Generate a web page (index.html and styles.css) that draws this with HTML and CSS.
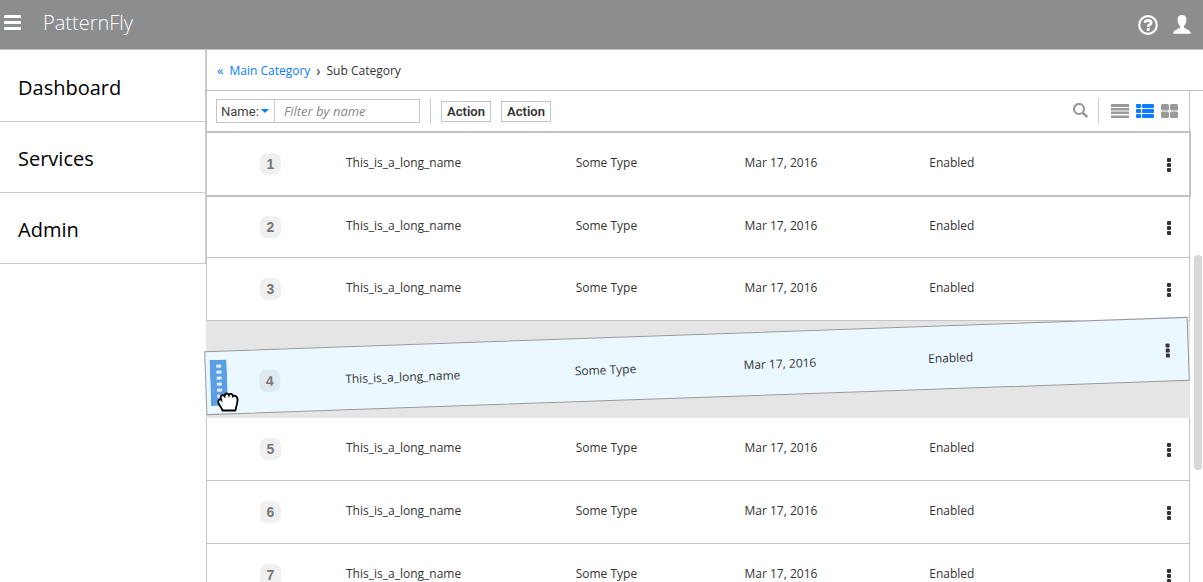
FILE: index.html
```
<!DOCTYPE html>
<html lang="en">
<head>
  <meta charset="UTF-8">
  <meta name="viewport" content="width=device-width, initial-scale=1.0">
  <title>PatternFly</title>
  <link rel="stylesheet" href="styles.css">
</head>
<body>
  <!-- Shared icons -->
  <svg class="sprite" aria-hidden="true">
    <symbol id="kebab" viewBox="0 0 6 16">
      <rect x="1" y="1" width="4" height="4" rx="1"/>
      <rect x="1" y="6" width="4" height="4" rx="1"/>
      <rect x="1" y="11" width="4" height="4" rx="1"/>
    </symbol>
  </svg>

  <header class="masthead">
    <button class="icon-btn menu-btn" aria-label="Toggle navigation">
      <svg width="17" height="15" viewBox="0 0 17 15" fill="#fff">
        <rect width="17" height="3" rx="1"/>
        <rect y="6" width="17" height="3" rx="1"/>
        <rect y="12" width="17" height="3" rx="1"/>
      </svg>
    </button>
    <span class="brand">PatternFly</span>
    <div class="masthead-tools">
      <button class="icon-btn" aria-label="Help">
        <svg width="20" height="20" viewBox="0 0 20 20" fill="none" stroke="#fff">
          <circle cx="10" cy="10" r="8.8" stroke-width="2.2"/>
          <path d="M6.8 7.8C7.2 5.9 8.4 5.3 10 5.3C11.9 5.3 13.1 6.3 13.1 7.7C13.1 9.8 10.2 9.7 10.2 12" stroke-width="2.8"/>
          <rect x="8.8" y="13" width="2.8" height="2.8" fill="#fff" stroke="none"/>
        </svg>
      </button>
      <button class="icon-btn" aria-label="User">
        <svg width="18" height="19" viewBox="0 0 18 19" fill="#fff">
          <path d="M9 0C6.2 0 4.5 1.8 4.5 4.5C4.5 7.5 5.5 9.5 7 10.7V12.5C6.5 13.7 1 14.3 0 18.7H18C17 14.3 11.5 13.7 11 12.5V10.7C12.5 9.5 13.5 7.5 13.5 4.5C13.5 1.8 11.8 0 9 0Z"/>
        </svg>
      </button>
    </div>
  </header>

  <div class="page">
    <nav class="sidebar">
      <a href="#">Dashboard</a>
      <a href="#">Services</a>
      <a href="#">Admin</a>
    </nav>

    <main class="main">
      <nav class="breadcrumb" aria-label="Breadcrumb">
        <a href="#"><span class="back">«</span>Main Category</a>
        <span class="sep">›</span>
        <span>Sub Category</span>
      </nav>

      <div class="content">
        <div class="list-view">
          <div class="toolbar">
            <div class="filter">
              <div class="filter-field">
                <select aria-label="Filter field">
                  <option>Name:</option>
                </select>
                <svg class="caret" width="8" height="4" viewBox="0 0 8 4"><path d="M0 0H8L4 4Z" fill="#0a7cff"/></svg>
              </div>
              <input type="text" placeholder="Filter by name" aria-label="Filter by name">
            </div>
            <span class="divider"></span>
            <button class="action">Action</button>
            <button class="action">Action</button>
            <div class="view-tools">
              <button class="icon-btn" aria-label="Search">
                <svg width="16" height="16" viewBox="0 0 16 16" fill="none" stroke="#999">
                  <circle cx="7" cy="6" r="5" stroke-width="2.2"/>
                  <path d="M11 10L14.5 13.3" stroke-width="2.6" stroke-linecap="round"/>
                </svg>
              </button>
              <span class="divider"></span>
              <button class="icon-btn" aria-label="Table view">
                <svg width="18" height="14" viewBox="0 0 18 14" fill="#999">
                  <rect width="18" height="3"/>
                  <rect y="4" width="18" height="2.5"/>
                  <rect y="7.5" width="18" height="2.5"/>
                  <rect y="11.5" width="18" height="2.5"/>
                </svg>
              </button>
              <button class="icon-btn" aria-label="List view" aria-pressed="true">
                <svg width="18" height="14" viewBox="0 0 18 14" fill="#0a7cff">
                  <rect width="5" height="4" rx="1"/><rect x="6" width="12" height="4" rx="1"/>
                  <rect y="5" width="5" height="4" rx="1"/><rect x="6" y="5" width="12" height="4" rx="1"/>
                  <rect y="10" width="5" height="4" rx="1"/><rect x="6" y="10" width="12" height="4" rx="1"/>
                </svg>
              </button>
              <button class="icon-btn" aria-label="Card view">
                <svg width="18" height="14" viewBox="0 0 18 14" fill="#999">
                  <rect width="8" height="6.5" rx="1.5"/><rect x="9" width="8" height="6.5" rx="1.5"/>
                  <rect y="7.5" width="8" height="6.5" rx="1.5"/><rect x="9" y="7.5" width="8" height="6.5" rx="1.5"/>
                </svg>
              </button>
            </div>
          </div>

          <table class="list" aria-label="Items">
            <tbody>
              <tr class="selected">
                <td class="order"><span class="badge">1</span></td>
                <td>This_is_a_long_name</td>
                <td>Some Type</td>
                <td>Mar 17, 2016</td>
                <td>Enabled</td>
                <td class="menu"><button class="icon-btn" aria-label="Actions for item 1"><svg width="6" height="16"><use href="#kebab"/></svg></button></td>
              </tr>
              <tr>
                <td class="order"><span class="badge">2</span></td>
                <td>This_is_a_long_name</td>
                <td>Some Type</td>
                <td>Mar 17, 2016</td>
                <td>Enabled</td>
                <td class="menu"><button class="icon-btn" aria-label="Actions for item 2"><svg width="6" height="16"><use href="#kebab"/></svg></button></td>
              </tr>
              <tr>
                <td class="order"><span class="badge">3</span></td>
                <td>This_is_a_long_name</td>
                <td>Some Type</td>
                <td>Mar 17, 2016</td>
                <td>Enabled</td>
                <td class="menu"><button class="icon-btn" aria-label="Actions for item 3"><svg width="6" height="16"><use href="#kebab"/></svg></button></td>
              </tr>
              <!-- Row being dragged to a new position -->
              <tr class="dragging">
                <td class="order">
                  <svg class="grip" width="17" height="46" viewBox="0 0 17 46">
                    <rect width="17" height="46" fill="#5a9fe6"/>
                    <path d="M9 5V46" stroke="#e4f0fc" stroke-width="5" stroke-dasharray="3 3"/>
                  </svg>
                  <span class="badge">4</span>
                </td>
                <td>This_is_a_long_name</td>
                <td>Some Type</td>
                <td>Mar 17, 2016</td>
                <td>Enabled</td>
                <td class="menu"><button class="icon-btn" aria-label="Actions for item 4"><svg width="6" height="16"><use href="#kebab"/></svg></button></td>
              </tr>
              <tr>
                <td class="order"><span class="badge">5</span></td>
                <td>This_is_a_long_name</td>
                <td>Some Type</td>
                <td>Mar 17, 2016</td>
                <td>Enabled</td>
                <td class="menu"><button class="icon-btn" aria-label="Actions for item 5"><svg width="6" height="16"><use href="#kebab"/></svg></button></td>
              </tr>
              <tr>
                <td class="order"><span class="badge">6</span></td>
                <td>This_is_a_long_name</td>
                <td>Some Type</td>
                <td>Mar 17, 2016</td>
                <td>Enabled</td>
                <td class="menu"><button class="icon-btn" aria-label="Actions for item 6"><svg width="6" height="16"><use href="#kebab"/></svg></button></td>
              </tr>
              <tr>
                <td class="order"><span class="badge">7</span></td>
                <td>This_is_a_long_name</td>
                <td>Some Type</td>
                <td>Mar 17, 2016</td>
                <td>Enabled</td>
                <td class="menu"><button class="icon-btn" aria-label="Actions for item 7"><svg width="6" height="16"><use href="#kebab"/></svg></button></td>
              </tr>
            </tbody>
          </table>
        </div>
        <div class="scroll-track"><div class="scroll-thumb"></div></div>
      </div>

      <!-- Grabbing hand cursor -->
      <svg class="cursor" width="22" height="20" viewBox="0 0 22 20">
        <path d="M5.5 18.5C5 16 2 13.5 1.3 10.5C.8 8 2.5 7 4.3 7.8C3 4.8 4 3 5.5 3C6.5 3 7.2 3.6 7.6 4.2C7.7 2.5 8.5 1.5 9.8 1.5C11 1.5 11.6 2.2 12 3C12.5 2 13.2 1.7 14.2 1.9C15.4 2.2 15.8 3 15.9 4.2C16.5 3.7 17.3 3.5 18.2 3.8C20 4.4 20.7 6 20.5 8.5C20.3 12 19 14.5 18.5 18.5Z" fill="#fff" stroke="#000" stroke-width="1.8" stroke-linejoin="round"/>
        <path d="M4.3 7.8L5.3 10M7.6 4.2L8 6M12 3.5V5.5M15.9 4.5L15.7 6" fill="none" stroke="#000" stroke-width=".8"/>
      </svg>
    </main>
  </div>
</body>
</html>
```
FILE: styles.css
```
* {
  box-sizing: border-box;
}
body {
  margin: 0;
  height: 100vh;
  display: flex;
  flex-direction: column;
  overflow: hidden;
  font-family: "Open Sans", sans-serif;
  font-size: 12px;
  color: #333;
  background: #fff;
}
a {
  color: #0a7cff;
  text-decoration: none;
}
.sprite {
  display: none;
}
.icon-btn {
  display: flex;
  padding: 0;
  border: 0;
  background: none;
  cursor: pointer;
}

/* Masthead */
.masthead {
  display: flex;
  flex: none;
  align-items: center;
  height: 50px;
  padding: 0 12px 0 4px;
  background: #8b8d8f;
  border-bottom: 1px solid #c4c4c4;
}
.brand {
  margin-left: 22px;
  padding-bottom: 4px;
  color: #fff;
  font-size: 20px;
  font-weight: 300;
}
.menu-btn {
  padding-bottom: 4px;
}
.masthead-tools {
  display: flex;
  align-items: center;
  gap: 15px;
  margin-left: auto;
}

/* Sidebar */
.page {
  display: flex;
  flex: 1;
  min-height: 0;
}
.sidebar {
  flex: none;
  width: 206px;
}
.sidebar a {
  display: flex;
  align-items: center;
  height: 71px;
  padding: 2px 18px 0;
  border-right: 1px solid #ccc;
  border-bottom: 1px solid #ccc;
  color: #000;
  font-size: 20px;
}
.sidebar a:first-child {
  height: 72px;
  padding-top: 4px;
}

/* Main */
.main {
  position: relative;
  display: flex;
  flex: 1;
  flex-direction: column;
  min-width: 0;
}
.breadcrumb {
  display: flex;
  flex: none;
  align-items: center;
  height: 41px;
  padding-left: 10px;
  border-left: 1px solid #c4c4c4;
  border-bottom: 1px solid #c4c4c4;
}
.back {
  margin-right: 6px;
  font-size: 13px;
}
.sep {
  margin: 0 6px;
  font-size: 14px;
}
.content {
  display: flex;
  flex: 1;
  min-height: 0;
}
.list-view {
  flex: 1;
  min-width: 0;
}

/* Toolbar */
.toolbar {
  display: flex;
  align-items: center;
  gap: 10px;
  height: 40px;
  padding: 0 10px 0 9px;
  border: solid #c4c4c4;
  border-width: 0 1px;
}
.filter {
  display: flex;
  width: 204px;
  height: 24px;
  border: 1px solid #c4c4c4;
}
.filter-field {
  display: grid;
  flex: none;
  align-items: center;
  width: 58px;
  border-right: 1px solid #ccc;
}
.filter-field select,
.caret {
  grid-area: 1 / 1;
}
.filter-field select {
  appearance: none;
  padding: 0 0 0 4px;
  border: 0;
  background: none;
  color: #444;
  font: 13px Roboto, sans-serif;
}
.caret {
  justify-self: end;
  margin-right: 5px;
  pointer-events: none;
}
.filter input {
  flex: 1;
  min-width: 0;
  padding: 0 9px;
  border: 0;
  background: none;
  font: 13px "Open Sans", sans-serif;
}
.filter input::placeholder {
  color: #888;
  font-style: italic;
}
.divider {
  width: 1px;
  height: 26px;
  background: #ccc;
}
.action {
  width: 50px;
  height: 21px;
  padding: 0;
  border: 1px solid #c4c4c4;
  background: #fff;
  color: #333;
  font: 600 13px Roboto, sans-serif;
}
.view-tools {
  display: flex;
  align-items: center;
  gap: 7px;
  margin-left: auto;
}
.view-tools .divider {
  margin: 0 5px 0 3px;
}

/* List */
.list,
.list tbody {
  display: flex;
  flex-direction: column;
}
.list tbody {
  background: #e5e5e5;
}
.list tr {
  display: grid;
  grid-template-columns: 139px 230fr 169fr 185fr 215fr 45px;
  align-items: center;
  height: 63px;
  background: #fff;
  border: solid #c4c4c4;
  border-width: 0 1px 1px;
}
.list tr.selected {
  height: 66px;
  margin-right: -1px;
  border-width: 2px 2px 2px 1px;
}
.list tr:nth-child(2) {
  height: 61px;
}
.list tr.dragging {
  z-index: 1;
  height: 64px;
  margin: 13px 1px 20px -1px;
  background: #ecf8ff;
  border: 1px solid #999;
  transform: rotate(-2deg);
}
.list td {
  padding: 0 0 4px;
}
.list .dragging td {
  padding-bottom: 0;
}
.list .order {
  display: grid;
  grid-template-columns: 53px auto;
  align-items: center;
  padding: 0;
}
.grip {
  margin-left: 4px;
}
.badge {
  grid-column: 2;
  width: 21px;
  height: 22px;
  border-radius: 7px;
  background: rgba(0, 0, 0, 0.06);
  color: #777;
  font: 700 14px/22px "Liberation Sans", sans-serif;
  text-align: center;
}
.list .menu {
  display: flex;
  justify-content: flex-end;
  padding: 1px 17px 0 0;
}
.menu svg {
  fill: #333;
}

/* Scrollbar */
.scroll-track {
  flex: none;
  width: 13px;
  padding: 164px 1px 0 4px;
}
.scroll-thumb {
  height: 215px;
  border-radius: 4px;
  background: #d8d8d8;
}
.cursor {
  position: absolute;
  z-index: 2;
  left: 11px;
  top: 342px;
}
```
